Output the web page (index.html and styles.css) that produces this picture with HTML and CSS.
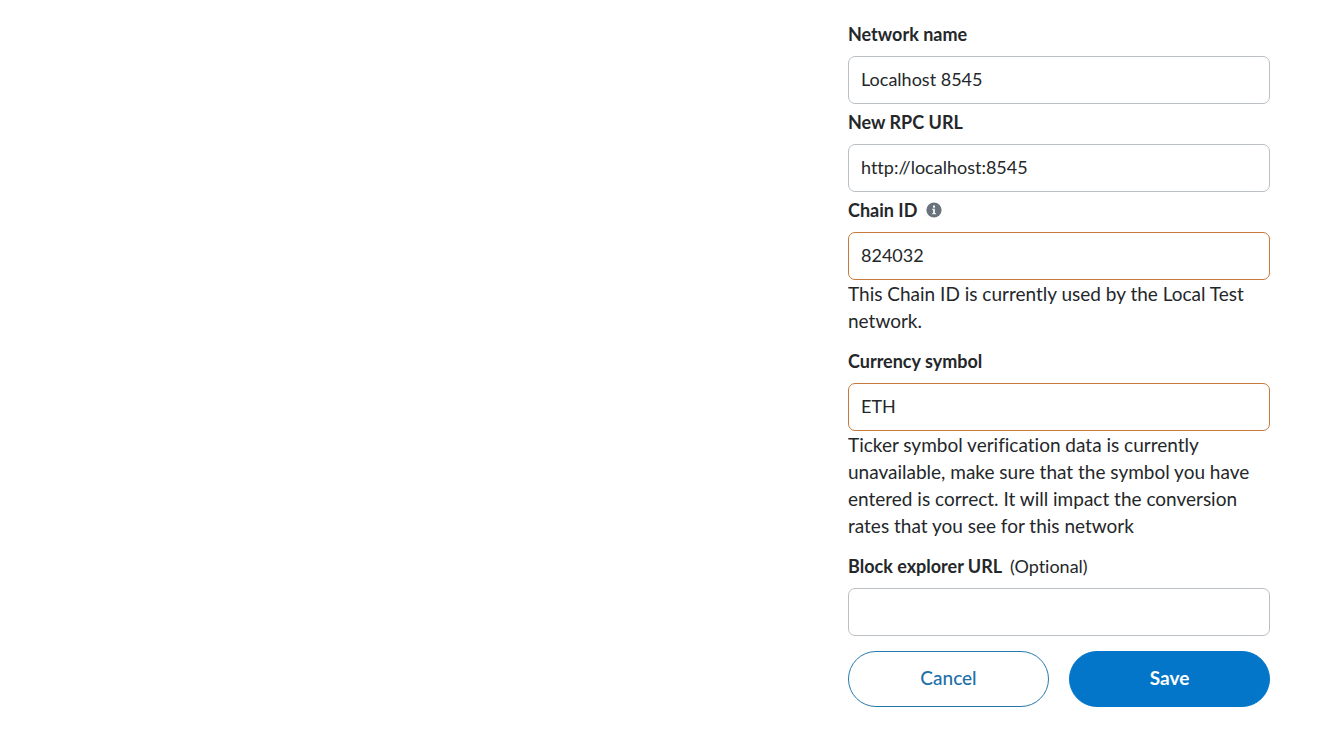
FILE: index.html
```html
<!DOCTYPE html>
<html lang="en">
<head>
<meta charset="utf-8">
<title>Network settings</title>
<link rel="stylesheet" href="styles.css">
</head>
<body>
<form class="network-form">
  <div class="field">
    <label class="label" for="name">Network name</label>
    <input class="input" id="name" type="text" value="Localhost 8545">
  </div>
  <div class="field">
    <label class="label" for="rpc">New RPC URL</label>
    <input class="input" id="rpc" type="text" value="http://localhost:8545">
  </div>
  <div class="field">
    <div class="label-row">
      <label class="label" for="chain">Chain ID</label>
      <svg class="info" viewBox="0 0 16 16" aria-hidden="true"><circle cx="8" cy="8" r="7.6" fill="#6a737d"/><rect x="7" y="3.6" width="2" height="2" fill="#fff"/><path d="M6.2 6.8H9v4.1h.9v1.3H6.2v-1.3H7V8.1h-.8z" fill="#e8eaec"/></svg>
    </div>
    <input class="input warning" id="chain" type="text" value="824032">
    <p class="help">This Chain ID is currently used by the Local Test network.</p>
  </div>
  <div class="field">
    <label class="label" for="symbol">Currency symbol</label>
    <input class="input warning" id="symbol" type="text" value="ETH">
    <p class="help">Ticker symbol verification data is currently unavailable, make sure that the symbol you have entered is correct. It will impact the conversion rates that you see for this network</p>
  </div>
  <div class="field">
    <label class="label" for="explorer">Block explorer URL <span class="optional">(Optional)</span></label>
    <input class="input" id="explorer" type="text">
  </div>
  <div class="actions">
    <button class="button cancel" type="button">Cancel</button>
    <button class="button save" type="submit">Save</button>
  </div>
</form>
</body>
</html>
```
FILE: styles.css
```css
* { box-sizing: border-box; }
body {
  margin: 0;
  padding: 20px 47px 24px 24px;
  background: #fff;
  color: #24272a;
  font: 18px/28px Lato, sans-serif;
  font-variant-ligatures: none;
}
.network-form {
  display: flex;
  flex-direction: column;
  gap: 4px;
  max-width: 422px;
  margin-left: auto;
}
.field { display: flex; flex-direction: column; }
.label { height: 36px; font-weight: 700; }
.label-row { display: flex; gap: 9px; }
.info { width: 16px; height: 16px; margin-top: 6px; }
.optional { margin-left: 4px; font-weight: 400; }
.input {
  width: 100%;
  height: 48px;
  padding: 0 12px 2px;
  border: 1px solid #bbc0c5;
  border-radius: 7px;
  background: #fff;
  color: inherit;
  font: inherit;
}
.warning { border-color: #c57a3c; }
.help { margin: 0 0 9px; font-size: 19px; line-height: 27px; }
.actions { display: flex; gap: 20px; margin-top: 11px; }
.button {
  flex: 1;
  height: 56px;
  padding: 0 16px 2px;
  border: 1px solid #0376c9;
  border-radius: 28px;
  font: inherit;
  font-size: 19px;
}
.cancel { border-color: #2478ae; background: #fff; color: #1c70a8; font-weight: 500; }
.save { background: #0376c9; color: #fff; font-weight: 700; }
```
